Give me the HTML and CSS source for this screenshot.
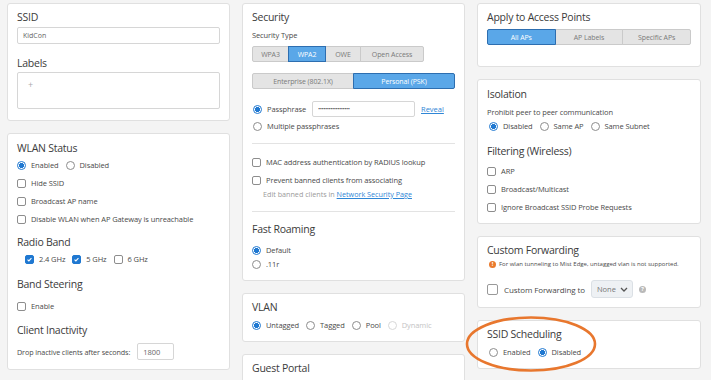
FILE: index.html
```html
<!DOCTYPE html>
<html lang="en">
<head>
    <meta charset="UTF-8">
    <meta name="viewport" content="width=device-width, initial-scale=1.0">
    <title>WLAN Settings</title>
    <link rel="stylesheet" href="styles.css">
</head>
<body>
    <div class="page">
        <!-- Colonne 1 -->
        <div class="column">
            <section class="card card-ssid">
                <h2 class="card-title">SSID</h2>
                <input class="text-input ssid-input" type="text" value="KidCon">
                <h2 class="card-title labels-title">Labels</h2>
                <div class="labels-box"><span class="labels-add">+</span></div>
            </section>

            <section class="card card-wlan">
                <h2 class="card-title">WLAN Status</h2>
                <div class="option-row">
                    <label class="option"><input type="radio" name="status" checked> Enabled</label>
                    <label class="option"><input type="radio" name="status"> Disabled</label>
                </div>
                <div class="option-row"><label class="option"><input type="checkbox"> Hide SSID</label></div>
                <div class="option-row"><label class="option"><input type="checkbox"> Broadcast AP name</label></div>
                <div class="option-row"><label class="option"><input type="checkbox"> Disable WLAN when AP Gateway is unreachable</label></div>

                <h2 class="card-title radio-band-title">Radio Band</h2>
                <div class="option-row band-row">
                    <label class="option"><input type="checkbox" checked> 2.4 GHz</label>
                    <label class="option"><input type="checkbox" checked> 5 GHz</label>
                    <label class="option"><input type="checkbox"> 6 GHz</label>
                </div>

                <h2 class="card-title steering-title">Band Steering</h2>
                <div class="option-row steering-row"><label class="option"><input type="checkbox"> Enable</label></div>

                <h2 class="card-title inactivity-title">Client Inactivity</h2>
                <div class="inactivity-row">
                    <span>Drop inactive clients after seconds:</span>
                    <input class="text-input seconds-input" type="text" value="1800">
                </div>
            </section>
        </div>

        <!-- Colonne 2 -->
        <div class="column">
            <section class="card card-security">
                <h2 class="card-title">Security</h2>
                <div class="field-label">Security Type</div>
                <div class="btn-group type-group">
                    <button class="seg-btn w-wpa3">WPA3</button>
                    <button class="seg-btn w-wpa2 selected">WPA2</button>
                    <button class="seg-btn w-owe">OWE</button>
                    <button class="seg-btn w-open">Open Access</button>
                </div>
                <div class="btn-group mode-group">
                    <button class="seg-btn grow">Enterprise (802.1X)</button>
                    <button class="seg-btn grow selected">Personal (PSK)</button>
                </div>
                <div class="pass-row">
                    <label class="option"><input type="radio" name="pass" checked> Passphrase</label>
                    <input class="text-input pass-input" type="text" value="••••••••••••••••••">
                    <a class="link" href="#">Reveal</a>
                </div>
                <div class="option-row short multi-row">
                    <label class="option"><input type="radio" name="pass"> Multiple passphrases</label>
                </div>
                <hr class="divider first-divider">
                <div class="option-row mac-row"><label class="option"><input type="checkbox"> MAC address authentication by RADIUS lookup</label></div>
                <div class="option-row"><label class="option"><input type="checkbox"> Prevent banned clients from associating</label></div>
                <div class="hint">Edit banned clients in <a class="link" href="#">Network Security Page</a></div>
                <hr class="divider second-divider">
                <h2 class="card-title roaming-title">Fast Roaming</h2>
                <div class="option-row short roaming-row">
                    <label class="option"><input type="radio" name="roam" checked> Default</label>
                </div>
                <div class="option-row short">
                    <label class="option"><input type="radio" name="roam"> .11r</label>
                </div>
            </section>

            <section class="card card-vlan">
                <h2 class="card-title">VLAN</h2>
                <div class="option-row short vlan-row">
                    <label class="option"><input type="radio" name="vlan" checked> Untagged</label>
                    <label class="option"><input type="radio" name="vlan"> Tagged</label>
                    <label class="option"><input type="radio" name="vlan"> Pool</label>
                    <label class="option disabled"><input type="radio" name="vlan" disabled> Dynamic</label>
                </div>
            </section>

            <section class="card card-guest">
                <h2 class="card-title">Guest Portal</h2>
            </section>
        </div>

        <!-- Colonne 3 -->
        <div class="column">
            <section class="card card-apply">
                <h2 class="card-title">Apply to Access Points</h2>
                <div class="btn-group apply-group">
                    <button class="seg-btn grow selected">All APs</button>
                    <button class="seg-btn grow">AP Labels</button>
                    <button class="seg-btn grow">Specific APs</button>
                </div>
            </section>

            <section class="card card-isolation">
                <h2 class="card-title">Isolation</h2>
                <div class="field-label prohibit-label">Prohibit peer to peer communication</div>
                <div class="option-row short isolation-row">
                    <label class="option"><input type="radio" name="iso" checked> Disabled</label>
                    <label class="option"><input type="radio" name="iso"> Same AP</label>
                    <label class="option"><input type="radio" name="iso"> Same Subnet</label>
                </div>
                <h2 class="card-title filtering-title">Filtering (Wireless)</h2>
                <div class="option-row filter-first"><label class="option"><input type="checkbox"> ARP</label></div>
                <div class="option-row"><label class="option"><input type="checkbox"> Broadcast/Multicast</label></div>
                <div class="option-row"><label class="option"><input type="checkbox"> Ignore Broadcast SSID Probe Requests</label></div>
            </section>

            <section class="card card-forwarding">
                <h2 class="card-title">Custom Forwarding</h2>
                <div class="warning"><span class="warn-icon">!</span>For wlan tunneling to Mist Edge, untagged vlan is not supported.</div>
                <div class="forward-row">
                    <label class="option big"><input type="checkbox"> Custom Forwarding to</label>
                    <div class="select-box">None
                        <svg width="8" height="5" viewBox="0 0 8 5"><path d="M1 1l3 3 3-3" fill="none" stroke="#555" stroke-width="1.3"/></svg>
                    </div>
                    <span class="help-icon">?</span>
                </div>
            </section>

            <section class="card card-schedule">
                <h2 class="card-title">SSID Scheduling</h2>
                <div class="option-row short schedule-row">
                    <label class="option"><input type="radio" name="sched"> Enabled</label>
                    <label class="option"><input type="radio" name="sched" checked> Disabled</label>
                </div>
            </section>

            <section class="card card-next"></section>
        </div>
    </div>

    <svg class="highlight" width="134" height="58" viewBox="0 0 134 58">
        <ellipse cx="67" cy="29" rx="64" ry="26.5" fill="none" stroke="#e8772e" stroke-width="2.6"/>
    </svg>
</body>
</html>
```

FILE: styles.css
```css
:root {
    --title-color: #3b3b3b;
    --text-color: #4a4a4a;
    --muted-color: #9a9a9a;
    --border-color: #e0e0e0;
    --blue: #1f78d1;
    --btn-blue: #5aa7e8;
    --btn-blue-border: #2d6eb0;
}

* {
    margin: 0;
    padding: 0;
    box-sizing: border-box;
}

body {
    font-family: 'Open Sans', sans-serif;
    background-color: #f4f4f4;
    color: var(--text-color);
    height: 380px;
    overflow: hidden;
    position: relative;
}

.page {
    display: grid;
    grid-template-columns: 223px 223px 224px;
    column-gap: 12px;
    padding: 3px 0 0 7px;
    align-items: start;
}

.column {
    display: flex;
    flex-direction: column;
    gap: 12px;
}

.card {
    background-color: white;
    border: 1px solid var(--border-color);
    border-radius: 3px;
    padding: 6px 9px 9px;
}

.card-title {
    font-size: 10.5px;
    font-weight: 400;
    line-height: 15px;
    letter-spacing: -0.25px;
    color: var(--title-color);
}

.field-label {
    font-size: 7.5px;
    line-height: 11px;
    letter-spacing: -0.1px;
    color: var(--text-color);
}

/* champs */
.text-input {
    display: block;
    font-family: inherit;
    font-size: 7px;
    color: #666;
    border: 1px solid #d6d6d6;
    border-radius: 2px;
    background: white;
    outline: none;
}

.ssid-input {
    width: 100%;
    height: 17px;
    margin-top: 2px;
    padding: 0 5px;
}

.labels-title {
    margin-top: 12px;
}

.labels-box {
    margin-top: 1px;
    height: 37px;
    border: 1px solid #d6d6d6;
    border-radius: 2px;
    padding: 0 0 0 10px;
    line-height: 18px;
}

.labels-add {
    font-size: 9px;
    color: #aaa;
}

.card-ssid {
    padding-bottom: 11px;
}

/* options */
.option-row {
    display: flex;
    align-items: center;
    gap: 7px;
    height: 18px;
}

.option-row.short {
    height: 14px;
}

.option {
    display: flex;
    align-items: center;
    gap: 4px;
    font-size: 7.5px;
    letter-spacing: -0.1px;
    color: var(--text-color);
    white-space: nowrap;
}

.option.disabled {
    color: #c4c4c4;
}

.option input {
    appearance: none;
    width: 9px;
    height: 9px;
    border: 1px solid #8d8d8d;
    background: white;
    flex-shrink: 0;
    margin: 0 1px 0 0;
}

.option input[type="checkbox"] {
    border-radius: 2px;
}

.option input[type="radio"] {
    border-radius: 50%;
}

.option input[type="radio"]:checked {
    border-color: var(--blue);
    background: radial-gradient(circle, var(--blue) 0 2.3px, white 2.8px);
}

.option input[type="radio"]:disabled {
    border-color: #d8d8d8;
}

.option input[type="checkbox"]:checked {
    border-color: var(--blue);
    background: var(--blue) url("data:image/svg+xml,%3Csvg xmlns='http://www.w3.org/2000/svg' viewBox='0 0 9 9'%3E%3Cpath d='M2 4.6l1.7 1.7L7 2.8' fill='none' stroke='white' stroke-width='1.4'/%3E%3C/svg%3E") center / 100% no-repeat;
}

.option.big input {
    width: 11px;
    height: 11px;
    border-color: #999;
}

/* carte WLAN */
.card-wlan {
    padding-top: 7px;
}

.radio-band-title {
    margin-top: 7px;
}

.band-row {
    padding-left: 8px;
    gap: 7px;
}

.steering-title {
    margin-top: 9px;
}

.steering-row {
    margin-top: 5px;
}

.inactivity-title {
    margin-top: 8px;
}

.inactivity-row {
    display: flex;
    align-items: center;
    gap: 7px;
    margin-top: 5px;
    font-size: 7.2px;
    letter-spacing: -0.1px;
}

.seconds-input {
    width: 37px;
    height: 17px;
    padding: 0 5px;
    font-size: 7.5px;
}

/* boutons */
.btn-group {
    display: flex;
    height: 16px;
}

.seg-btn {
    font-family: inherit;
    font-size: 7px;
    letter-spacing: -0.1px;
    color: #7a7a7a;
    background-color: #e4e4e4;
    border: 1px solid #cacaca;
    margin-left: -1px;
    cursor: pointer;
}

.seg-btn:first-child {
    margin-left: 0;
    border-radius: 2px 0 0 2px;
}

.seg-btn:last-child {
    border-radius: 0 2px 2px 0;
}

.seg-btn.selected {
    background-color: var(--btn-blue);
    border-color: var(--btn-blue-border);
    color: white;
    position: relative;
}

.seg-btn.grow {
    flex: 1;
}

.w-wpa3 { width: 37px; }
.w-wpa2 { width: 38px; }
.w-owe { width: 36px; }
.w-open { width: 64px; }

.type-group {
    margin-top: 5px;
}

.mode-group {
    margin-top: 11px;
}

.apply-group {
    margin-top: 4px;
}

.card-apply {
    padding-bottom: 21px;
}

/* sécurité */
.card-security .field-label {
    margin-top: 5px;
}

.pass-row {
    display: flex;
    align-items: center;
    height: 16px;
    margin-top: 12px;
    padding-left: 1px;
}

.pass-row .option {
    width: 59px;
}

.pass-input {
    width: 103px;
    height: 16px;
    padding: 0 5px;
    font-size: 6px;
    letter-spacing: -0.5px;
    color: #555;
}

.pass-row .link {
    margin-left: 6px;
}

.link {
    font-size: 7.5px;
    color: #2f86d6;
    text-decoration: underline;
}

.multi-row {
    margin-top: 2px;
    padding-left: 1px;
}

.divider {
    border: none;
    border-top: 1px solid #e3e3e3;
}

.first-divider {
    margin-top: 10px;
}

.mac-row {
    margin-top: 9px;
}

.hint {
    font-size: 7.2px;
    line-height: 11px;
    color: var(--muted-color);
    padding-left: 11px;
}

.hint .link {
    font-size: 7.2px;
}

.second-divider {
    margin-top: 11px;
}

.roaming-title {
    margin-top: 10px;
}

.roaming-row {
    margin-top: 6px;
}

.vlan-row {
    margin-top: 3px;
}

/* isolation */
.card-isolation {
    padding-top: 7px;
    padding-bottom: 7px;
}

.prohibit-label {
    margin-top: 5px;
}

.isolation-row {
    margin-top: 1px;
    padding-left: 2px;
}

.filtering-title {
    margin-top: 11px;
}

.filter-first {
    margin-top: 3px;
}

/* custom forwarding */
.warning {
    display: flex;
    align-items: center;
    gap: 3px;
    margin-top: 2px;
    font-size: 6px;
    line-height: 9px;
    color: var(--text-color);
    padding-left: 2px;
}

.warn-icon {
    width: 7px;
    height: 7px;
    border-radius: 50%;
    background-color: #ea7a2c;
    color: white;
    font-size: 5.5px;
    font-weight: 700;
    display: flex;
    align-items: center;
    justify-content: center;
}

.forward-row {
    display: flex;
    align-items: center;
    height: 18px;
    margin-top: 11px;
    gap: 6px;
}

.forward-row .option {
    font-size: 8px;
    gap: 5px;
}

.select-box {
    display: flex;
    align-items: center;
    justify-content: space-between;
    width: 42px;
    height: 18px;
    padding: 0 4px 0 5px;
    background-color: #eef1f4;
    border: 1px solid #dbe0e5;
    border-radius: 3px;
    font-size: 7.5px;
    color: #777;
}

.help-icon {
    width: 7px;
    height: 7px;
    border-radius: 50%;
    background-color: #b9b9b9;
    color: white;
    font-size: 5.5px;
    font-weight: 700;
    display: flex;
    align-items: center;
    justify-content: center;
}

.schedule-row {
    margin-top: 3px;
    padding-left: 2px;
}

.card-next {
    height: 30px;
}

/* cercle de mise en évidence */
.highlight {
    position: absolute;
    left: 464px;
    top: 315px;
}
```
